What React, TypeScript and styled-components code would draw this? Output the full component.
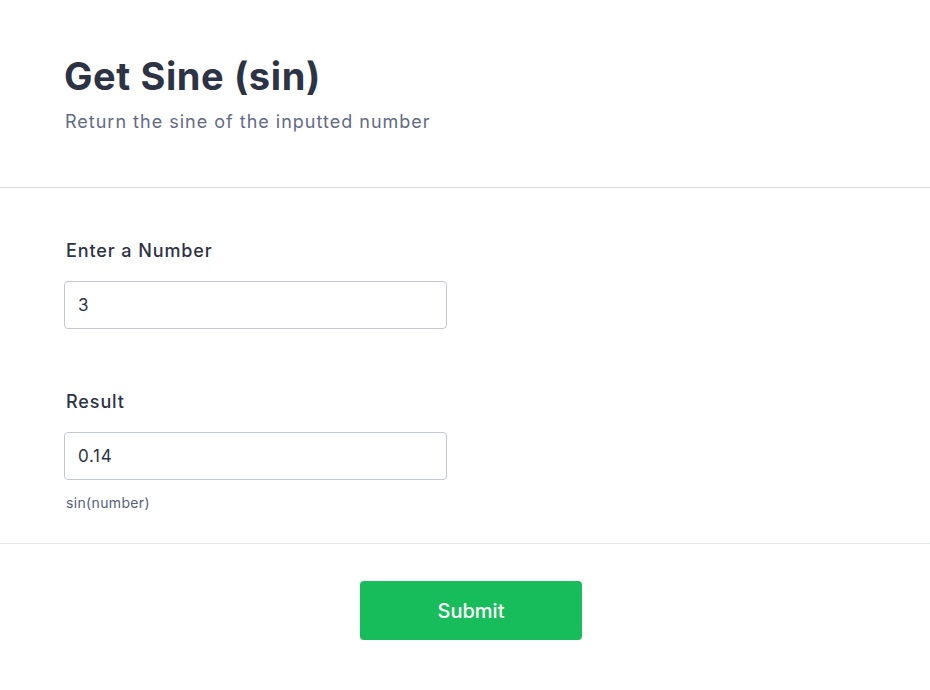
import styled, { createGlobalStyle } from "styled-components";
import { useState } from "react";

export default function App() {
  const [num, setNum] = useState("3");
  const result = isNaN(parseFloat(num)) ? "" : Math.sin(parseFloat(num)).toFixed(2);

  return (
    <>
      <GlobalStyle />
      <Page>
        <Header>
          <Title>Get Sine (sin)</Title>
          <Subtitle>Return the sine of the inputted number</Subtitle>
        </Header>

        <Form>
          <Field>
            <Label htmlFor="num">Enter a Number</Label>
            <Input id="num" value={num} onChange={(e) => setNum(e.target.value)} />
          </Field>
          <Field $gap={61}>
            <Label htmlFor="res">Result</Label>
            <Input id="res" value={result} readOnly />
            <Help>sin(number)</Help>
          </Field>
        </Form>

        <Footer>
          <SubmitButton type="button">Submit</SubmitButton>
        </Footer>
      </Page>
    </>
  );
}

const GlobalStyle = createGlobalStyle`
  html, body, #root {
    margin: 0;
    padding: 0;
    background: #fff;
  }
  body {
    font-family: Inter, "Noto Sans", sans-serif;
    color: #2c3345;
  }
`;

const Page = styled.div`
  width: 930px;
  min-height: 690px;
  display: flex;
  flex-direction: column;
`;

const Header = styled.div`
  padding: 52px 64px 51px;
  border-bottom: 1px solid #d8dae9;
`;

const Title = styled.h1`
  margin: 0;
  font-size: 38px;
  line-height: 48px;
  font-weight: 700;
  letter-spacing: 0.6px;
  color: #2c3345;
`;

const Subtitle = styled.p`
  margin: 8px 0 0 1px;
  font-size: 18px;
  line-height: 28px;
  letter-spacing: 1px;
  color: #626a85;
`;

const Form = styled.div`
  padding: 51px 64px 30px;
  border-bottom: 1px solid #e6e7ee;
`;

const Field = styled.div<{ $gap?: number }>`
  display: flex;
  flex-direction: column;
  width: 383px;
  margin-top: ${({ $gap }) => ($gap ? `${$gap}px` : "0")};
`;

const Label = styled.label`
  font-size: 18px;
  line-height: 24px;
  font-weight: 500;
  letter-spacing: 0.9px;
  color: #2c3345;
  padding-left: 2px;
  margin-bottom: 18px;
`;

const Input = styled.input`
  box-sizing: border-box;
  width: 383px;
  height: 48px;
  padding: 0 13px;
  border: 1px solid #c3c6d6;
  border-radius: 4px;
  font-family: Inter, "Noto Sans", sans-serif;
  font-size: 17px;
  letter-spacing: 0.7px;
  color: #2c3345;
  background: #fff;
  outline: none;
`;

const Help = styled.div`
  margin-top: 13px;
  padding-left: 2px;
  font-size: 14px;
  line-height: 20px;
  letter-spacing: 0.35px;
  color: #57607a;
`;

const Footer = styled.div`
  display: flex;
  justify-content: center;
  padding: 37px 0 0 12px;
`;

const SubmitButton = styled.button`
  width: 222px;
  height: 59px;
  border: none;
  border-radius: 4px;
  background: #18bd5b;
  color: #fff;
  font-family: Inter, "Noto Sans", sans-serif;
  font-size: 20px;
  font-weight: 500;
  cursor: pointer;
`;
